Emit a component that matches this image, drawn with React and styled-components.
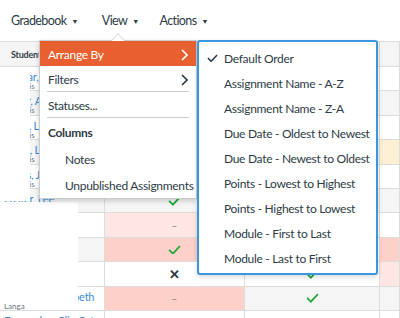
import React from 'react';
import styled, { createGlobalStyle } from 'styled-components';

const GlobalStyle = createGlobalStyle`
  body {
    margin: 0;
    font-family: Lato, "Open Sans", sans-serif;
    color: #2d3b45;
    background: #fff;
  }
`;

const Page = styled.div`
  position: relative;
  width: 400px;
  height: 318px;
  overflow: hidden;
  background: #fff;
`;

const TopBar = styled.div`
  height: 41px;
  display: flex;
  align-items: center;
  padding-left: 11px;
`;

const NavItem = styled.div`
  display: flex;
  align-items: center;
  font-size: 12.5px;
  letter-spacing: -0.6px;
  margin-right: ${props => props.gap}px;
`;

const Caret = styled.span`
  font-size: 7px;
  margin-left: 5px;
`;

const Grid = styled.div`
  display: grid;
  grid-template-columns: 105px 140px 135px 1fr;
  grid-template-rows: 25px;
  grid-auto-rows: 24.4px;
  border-top: 1px solid #dcdcdc;
`;

const HeadCell = styled.div`
  background: #f5f5f5;
  border-right: 1px solid #dcdcdc;
  border-bottom: 1px solid #dcdcdc;
  font-size: 9px;
  letter-spacing: -0.2px;
  font-weight: 700;
  display: flex;
  align-items: center;
  padding-left: 11px;
`;

const Cell = styled.div`
  background: ${props => props.bg};
  border-right: 1px solid #dcdcdc;
  border-bottom: 1px solid #dcdcdc;
  display: flex;
  align-items: center;
  justify-content: center;
  font-size: 12px;
`;

const StudentCell = styled.div`
  background: ${props => props.bg};
  border-right: 1px solid #dcdcdc;
  border-bottom: 1px solid #dcdcdc;
  padding: 4px 0 0 4px;
  overflow: hidden;
  white-space: nowrap;
`;

const Name = styled.div`
  font-size: 11px;
  line-height: 11px;
  letter-spacing: -0.2px;
  color: #3a8bd6;
`;

const Section = styled.div`
  font-size: 8px;
  line-height: 9px;
  color: #6b7780;
`;

const Dash = styled.span`
  color: #777;
  font-size: 10px;
`;

const Cross = styled.span`
  color: #2d3b45;
  font-weight: 700;
  font-size: 13px;
`;

const Redaction = styled.div`
  position: absolute;
  background: #fff;
  left: 0;
  top: ${props => props.top}px;
  width: ${props => props.w}px;
  height: ${props => props.h}px;
`;

const ViewMenu = styled.div`
  position: absolute;
  left: 39px;
  top: 40px;
  width: 158px;
  height: 159px;
  box-sizing: border-box;
  background: #fff;
  border: 1px solid #c7cdd1;
  box-shadow: 0 2px 5px rgba(0, 0, 0, 0.18);

  &::before,
  &::after {
    content: '';
    position: absolute;
    left: 71px;
    border: 7px solid transparent;
    border-top: 0;
  }
  &::before {
    top: -8px;
    border-bottom: 8px solid #c7cdd1;
  }
  &::after {
    top: -7px;
    border-bottom: 8px solid #fff;
  }
`;

const MenuItem = styled.div`
  height: ${props => props.h || 25}px;
  box-sizing: border-box;
  display: flex;
  align-items: center;
  justify-content: space-between;
  padding: 2px 8px 0 ${props => props.indent || 8}px;
  font-size: 12px;
  letter-spacing: -0.3px;
  white-space: nowrap;
  font-weight: ${props => (props.bold ? 700 : 400)};
  background: ${props => (props.active ? '#e8602f' : 'transparent')};
  color: ${props => (props.active ? '#fff' : '#2d3b45')};
  position: relative;
  z-index: 1;
`;

const Separator = styled.div`
  height: 1px;
  margin: 0 7px;
  background: #c7cdd1;
`;

const ArrangeMenu = styled.div`
  position: absolute;
  left: 197px;
  top: 40px;
  width: 181px;
  height: 235px;
  box-sizing: border-box;
  padding: 3px 0;
  background: #fff;
  border: 2px solid #3a96dd;
  border-radius: 3px;
  box-shadow: 0 2px 5px rgba(0, 0, 0, 0.15);
`;

const Option = styled.div`
  height: 25px;
  box-sizing: border-box;
  padding-top: 1px;
  display: flex;
  align-items: center;
  padding-left: 8px;
  font-size: 12px;
  letter-spacing: -0.3px;
  color: #2d3b45;
  white-space: nowrap;
`;

const CheckSlot = styled.span`
  width: 17px;
  display: flex;
  align-items: center;
`;

const Chevron = ({ color }) => (
  <svg width="7" height="12" viewBox="0 0 7 12">
    <path d="M1 1l5 5-5 5" fill="none" stroke={color} strokeWidth="1.6" />
  </svg>
);

const Check = ({ color, size = 12 }) => (
  <svg width={size} height={size * 0.75} viewBox="0 0 12 9">
    <path d="M1 4.5l3.5 3.5L11 1" fill="none" stroke={color} strokeWidth="1.6" />
  </svg>
);

const GRAY = '#f5f5f5';
const WHITE = '#fff';
const PINK = '#fdd0c9';
const LPINK = '#fde6e3';
const YELLOW = '#fdefd3';

const rows = [
  { name: 'Aguilar, Sal,', sec: 'Class Vis', sBg: WHITE, a: [WHITE, 'check'], b: [WHITE, 'check'], c: WHITE },
  { name: 'Baker, AnnM', sec: 'Class Vis', sBg: GRAY, a: [GRAY, 'check'], b: [GRAY, 'check'], c: GRAY },
  { name: 'Chen, LuNe', sec: 'Class Vis', sBg: WHITE, a: [WHITE, 'check'], b: [WHITE, 'check'], c: WHITE },
  { name: 'Davis, Lupe', sec: 'Class Vis', sBg: GRAY, a: [GRAY, 'check'], b: [GRAY, 'check'], c: YELLOW },
  { name: 'Evans, Jess', sec: 'Class Vis', sBg: WHITE, a: [WHITE, 'check'], b: [WHITE, 'check'], c: WHITE },
  { name: 'Foster, Lee', sec: 'Class Vis', sBg: GRAY, a: [GRAY, 'check'], b: [GRAY, 'check'], c: GRAY },
  { name: 'Garcia, Ana', sec: 'Class Vis', sBg: WHITE, a: [LPINK, 'dash'], b: [WHITE, 'check'], c: WHITE },
  { name: 'Harris, Tom', sec: 'Class Vis', sBg: GRAY, a: [PINK, 'check'], b: [WHITE, 'check'], c: PINK },
  { name: 'Irwin, Max', sec: 'Class Vis', sBg: WHITE, a: [WHITE, 'cross'], b: [WHITE, 'check'], c: LPINK },
  { name: 'Langanas, Elizabeth', sec: 'Langa', sBg: WHITE, a: [PINK, 'dash'], b: [GRAY, 'check'], c: GRAY },
  { name: 'Fernandez, Clio Cat', sec: 'Class Vis', sBg: WHITE, a: [WHITE, ''], b: [WHITE, ''], c: WHITE },
];

const Mark = ({ kind }) => {
  if (kind === 'check') return <Check color="#22a83a" size={13} />;
  if (kind === 'dash') return <Dash>–</Dash>;
  if (kind === 'cross') return <Cross>✕</Cross>;
  return null;
};

const sortOptions = [
  'Default Order',
  'Assignment Name - A-Z',
  'Assignment Name - Z-A',
  'Due Date - Oldest to Newest',
  'Due Date - Newest to Oldest',
  'Points - Lowest to Highest',
  'Points - Highest to Lowest',
  'Module - First to Last',
  'Module - Last to First',
];

export default function App() {
  return (
    <Page>
      <GlobalStyle />
      <TopBar>
        <NavItem gap={24}>Gradebook<Caret>▼</Caret></NavItem>
        <NavItem gap={21}>View<Caret>▼</Caret></NavItem>
        <NavItem gap={0}>Actions<Caret>▼</Caret></NavItem>
      </TopBar>

      <Grid>
        <HeadCell>Student</HeadCell>
        <HeadCell />
        <HeadCell />
        <HeadCell />
        {rows.map((r, i) => (
          <React.Fragment key={i}>
            <StudentCell bg={r.sBg}>
              <Name>{r.name}</Name>
              <Section>{r.sec}</Section>
            </StudentCell>
            <Cell bg={r.a[0]}><Mark kind={r.a[1]} /></Cell>
            <Cell bg={r.b[0]}><Mark kind={r.b[1]} /></Cell>
            <Cell bg={r.c} />
          </React.Fragment>
        ))}
      </Grid>

      <Redaction top={67} w={30} h={134} />
      <Redaction top={202} w={78} h={102} />

      <ViewMenu>
        <MenuItem active>
          Arrange By
          <Chevron color="#fff" />
        </MenuItem>
        <MenuItem>
          Filters
          <Chevron color="#2d3b45" />
        </MenuItem>
        <Separator />
        <MenuItem>Statuses...</MenuItem>
        <Separator />
        <MenuItem bold h={27}>Columns</MenuItem>
        <MenuItem indent={25} h={26}>Notes</MenuItem>
        <MenuItem indent={25} h={26}>Unpublished Assignments</MenuItem>
      </ViewMenu>

      <ArrangeMenu>
        {sortOptions.map((label, i) => (
          <Option key={label}>
            <CheckSlot>{i === 0 && <Check color="#2d3b45" size={11} />}</CheckSlot>
            {label}
          </Option>
        ))}
      </ArrangeMenu>
    </Page>
  );
}
